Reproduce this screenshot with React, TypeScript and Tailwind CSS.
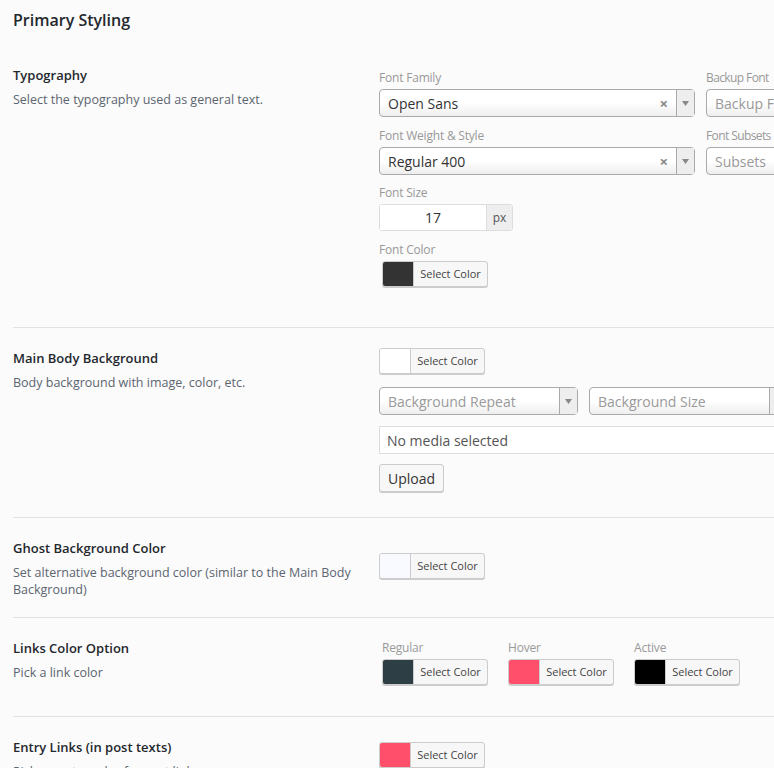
const ColorButton = ({ swatch, className = "" }: { swatch: string; className?: string }) => {
  return (
    <div
      className={`flex h-[26px] w-[106px] overflow-hidden rounded-[3px] border border-[#cccccc] bg-[#f7f7f7] shadow-[0_1px_0_#cccccc] ${className}`}
    >
      <span className="h-full w-[31px] border-r border-[#cccccc]" style={{ backgroundColor: swatch }} />
      <span className="flex flex-1 items-center justify-center text-[11px] text-[#444]">Select Color</span>
    </div>
  );
};

const Select = ({
  value,
  placeholder = false,
  clear = false,
  width,
}: {
  value: string;
  placeholder?: boolean;
  clear?: boolean;
  width: string;
}) => {
  return (
    <div
      className={`flex h-[28px] shrink-0 items-stretch rounded-[4px] border border-[#aaaaaa] bg-gradient-to-b from-white from-50% to-[#eeeeee] ${width}`}
    >
      <span
        className={`flex flex-1 items-center truncate pl-[8px] text-[14px] ${placeholder ? "text-[#999]" : "text-[#333]"}`}
      >
        {value}
      </span>
      {clear && <span className="flex items-center pr-[8px] text-[15px] font-bold text-[#888]">×</span>}
      <span className="flex w-[18px] items-center justify-center border-l border-[#aaaaaa] bg-[#eeeeee]">
        <svg width="7" height="5" viewBox="0 0 7 5">
          <path d="M0 0h7L3.5 5z" fill="#888" />
        </svg>
      </span>
    </div>
  );
};

const FieldLabel = ({ children, tight = false }: { children: React.ReactNode; tight?: boolean }) => (
  <div
    className={`mb-[3px] whitespace-nowrap text-[12px] leading-[16px] text-[#999] ${tight ? "tracking-[-0.6px]" : "tracking-[-0.2px]"}`}
  >
    {children}
  </div>
);

const Info = ({ title, text }: { title: string; text: string }) => (
  <div className="w-[366px] shrink-0 pr-[20px]">
    <h3 className="text-[13px] font-semibold leading-[20px] text-[#23282d]">{title}</h3>
    <p className="mt-[6px] text-[12.5px] leading-[17px] text-[#5b6570]">{text}</p>
  </div>
);

export default function App() {
  return (
    <div
      className="h-[768px] w-[774px] overflow-hidden bg-[#fbfbfb] pl-[13px]"
      style={{ fontFamily: '"Open Sans", "Noto Sans", sans-serif' }}
    >
      <h2 className="pt-[9px] text-[16px] font-semibold leading-[22px] text-[#23282d]">Primary Styling</h2>

      {/* typography */}
      <div className="flex border-b border-[#e2e2e2] pt-[34px] pb-[40px]">
        <Info title="Typography" text="Select the typography used as general text." />
        <div className="flex flex-col pt-[5px]">
          <div className="flex gap-[11px]">
            <div>
              <FieldLabel>Font Family</FieldLabel>
              <Select value="Open Sans" clear width="w-[316px]" />
            </div>
            <div>
              <FieldLabel tight>Backup Font</FieldLabel>
              <Select value="Backup Font" placeholder width="w-[200px]" />
            </div>
          </div>
          <div className="mt-[11px] flex gap-[11px]">
            <div>
              <FieldLabel>Font Weight &amp; Style</FieldLabel>
              <Select value="Regular 400" clear width="w-[316px]" />
            </div>
            <div>
              <FieldLabel tight>Font Subsets</FieldLabel>
              <Select value="Subsets" placeholder width="w-[200px]" />
            </div>
          </div>
          <div className="mt-[10px]">
            <FieldLabel>Font Size</FieldLabel>
            <div className="flex h-[27px] w-[134px] rounded-[3px] border border-[#dddddd]">
              <span className="flex flex-1 items-center justify-center bg-white text-[14px] text-[#333]">17</span>
              <span className="flex w-[26px] items-center justify-center border-l border-[#dddddd] bg-[#eeeeee] text-[12px] text-[#555]">
                px
              </span>
            </div>
          </div>
          <div className="mt-[11px]">
            <FieldLabel>Font Color</FieldLabel>
            <ColorButton swatch="#333333" className="ml-[3px]" />
          </div>
        </div>
      </div>

      {/* main body background */}
      <div className="flex border-b border-[#e2e2e2] pt-[20px] pb-[25px]">
        <Info title="Main Body Background" text="Body background with image, color, etc." />
        <div className="flex flex-col">
          <ColorButton swatch="#ffffff" />
          <div className="mt-[13px] flex gap-[11px]">
            <Select value="Background Repeat" placeholder width="w-[199px]" />
            <Select value="Background Size" placeholder width="w-[199px]" />
          </div>
          <div className="mt-[11px] flex h-[28px] w-[409px] items-center border border-[#dddddd] bg-white pl-[7px] text-[14px] text-[#555]">
            No media selected
          </div>
          <div className="mt-[10px] flex h-[28px] w-[65px] items-center justify-center rounded-[3px] border border-[#cccccc] bg-[#f7f7f7] text-[14px] text-[#333] shadow-[0_1px_0_#cccccc]">
            Upload
          </div>
        </div>
      </div>

      {/* ghost background */}
      <div className="flex border-b border-[#e2e2e2] pt-[20px] pb-[19px]">
        <Info
          title="Ghost Background Color"
          text="Set alternative background color (similar to the Main Body Background)"
        />
        <div className="pt-[15px]">
          <ColorButton swatch="#f8faff" />
        </div>
      </div>

      {/* links color */}
      <div className="flex border-b border-[#e2e2e2] pt-[20px] pb-[31px]">
        <Info title="Links Color Option" text="Pick a link color" />
        <div className="flex gap-[20px] pl-[3px] pt-[2px]">
          <div>
            <FieldLabel>Regular</FieldLabel>
            <ColorButton swatch="#2d3f44" />
          </div>
          <div>
            <FieldLabel>Hover</FieldLabel>
            <ColorButton swatch="#ff4f6a" />
          </div>
          <div>
            <FieldLabel>Active</FieldLabel>
            <ColorButton swatch="#000000" />
          </div>
        </div>
      </div>

      {/* entry links */}
      <div className="flex pt-[20px]">
        <Info title="Entry Links (in post texts)" text="Pick an entry color for post links" />
        <div className="pt-[5px]">
          <ColorButton swatch="#ff4f6a" />
        </div>
      </div>
    </div>
  );
}
